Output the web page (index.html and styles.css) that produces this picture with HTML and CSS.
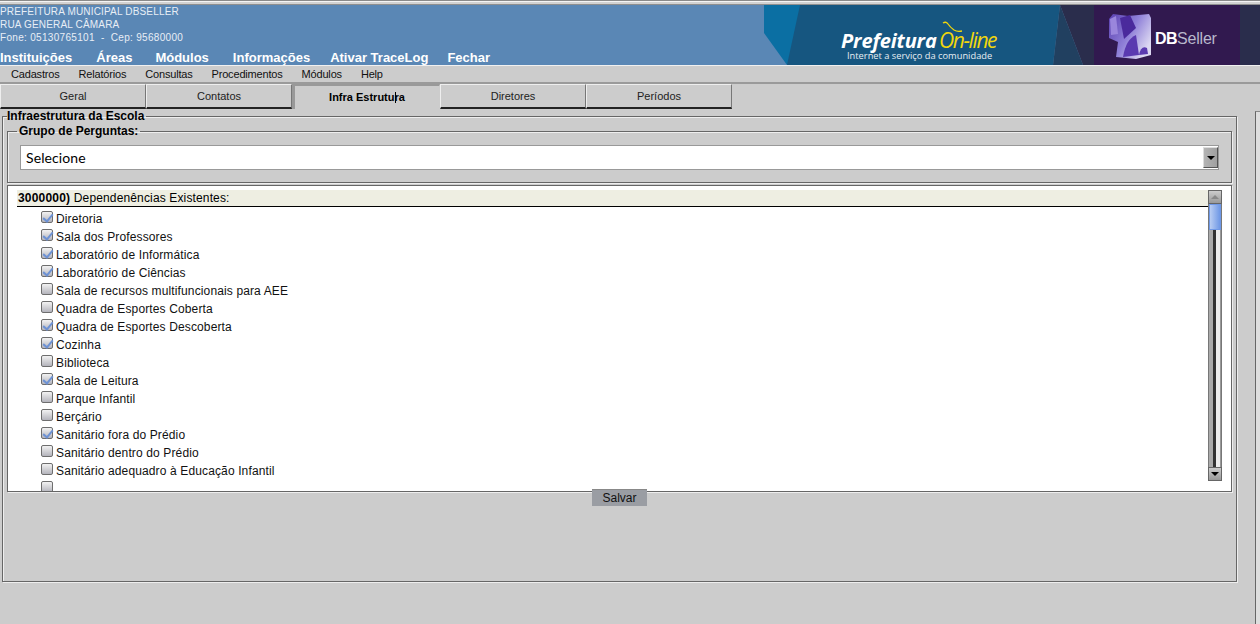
FILE: index.html
```html
<!DOCTYPE html>
<html lang="pt">
<head>
<meta charset="utf-8">
<title>Infraestrutura da Escola</title>
<link rel="stylesheet" href="styles.css">
</head>
<body>
<div class="topline"></div>
<header class="header">
  <div class="header-left">
    <div class="info">
      <div>PREFEITURA MUNICIPAL DBSELLER</div>
      <div>RUA GENERAL CÂMARA</div>
      <div class="phone">Fone: 05130765101 &nbsp;-&nbsp; Cep: 95680000</div>
    </div>
    <nav class="mainmenu">
      <a>Instituições</a><a>Áreas</a><a>Módulos</a><a>Informações</a><a>Ativar TraceLog</a><a>Fechar</a>
    </nav>
  </div>
  <svg class="banner" width="496" height="60" viewBox="0 0 496 60">
    <defs>
      <linearGradient id="cube" x1="0" y1="0" x2="1" y2="0.6">
        <stop offset="0" stop-color="#5a3fb0"/>
        <stop offset=".55" stop-color="#8f80d8"/>
        <stop offset="1" stop-color="#dcd8f2"/>
      </linearGradient>
    </defs>
    <rect width="496" height="60" fill="#5a87b5"/>
    <polygon points="0,0 36,0 36,60 23,60 0,28" fill="#0b6fa3"/>
    <polygon points="36,0 296,0 289,60 23,60" fill="#165680"/>
    <polygon points="296,0 289,60 319,60" fill="#214060"/>
    <polygon points="296,0 496,0 496,60 319,60" fill="#2a2d4c"/>
    <rect x="330" y="0" width="146" height="60" fill="#31194f"/>
    <text x="77" y="43" class="b-pref">Prefeitura</text>
    <text x="175" y="43" class="b-online">On-line</text>
    <path d="M179 18 q3 -2 5 1 t6 6 q3 2 8 1" fill="none" stroke="#f2d70c" stroke-width="1.3"/>
    <text x="83" y="54" class="b-sub">Internet a serviço da comunidade</text>
    <path d="M349 9 L364 11 L385 9 L387 13 L387 50 L372 54 L352 52 L354 37 L345 33 L345 14 Z" fill="url(#cube)"/>
    <path d="M346 14 L352 11 L354 29 L347 30 Z" fill="#9a86dc"/>
    <path d="M356 13 L366 10 L372 23 L360 34 Z" fill="#4a2a9c"/>
    <path d="M359 52 Q362 34 372 30 L375 50 Z" fill="#5a3ab0"/>
    <path d="M375 50 Q377 40 383 43 L384 49 Z" fill="#5a3ab0"/>
    <text x="391" y="39" class="b-db">DB</text>
    <text x="413" y="39" class="b-seller">Seller</text>
  </svg>
</header>
<nav class="submenu">
  <a>Cadastros</a><a>Relatórios</a><a>Consultas</a><a>Procedimentos</a><a>Módulos</a><a>Help</a>
</nav>
<div class="tabs">
  <div class="tab">Geral</div>
  <div class="tab">Contatos</div>
  <div class="tab active">Infra Estrutura<span class="caret"></span></div>
  <div class="tab">Diretores</div>
  <div class="tab">Períodos</div>
</div>
<div class="workspace">
  <main class="content">
    <fieldset class="panel">
      <legend>Infraestrutura da Escola</legend>
      <fieldset class="group">
        <legend>Grupo de Perguntas:</legend>
        <div class="select">
          <span class="select-text">Selecione</span>
          <span class="select-btn"><span class="arrow-down"></span></span>
        </div>
      </fieldset>
      <section class="listbox">
        <div class="questions">
          <div class="qhead"><b>3000000)</b> Dependenências Existentes:</div>
          <ul class="opts">
            <li><span class="cb on"></span>Diretoria</li>
            <li><span class="cb on"></span>Sala dos Professores</li>
            <li><span class="cb on"></span>Laboratório de Informática</li>
            <li><span class="cb on"></span>Laboratório de Ciências</li>
            <li><span class="cb"></span>Sala de recursos multifuncionais para AEE</li>
            <li><span class="cb"></span>Quadra de Esportes Coberta</li>
            <li><span class="cb on"></span>Quadra de Esportes Descoberta</li>
            <li><span class="cb on"></span>Cozinha</li>
            <li><span class="cb"></span>Biblioteca</li>
            <li><span class="cb on"></span>Sala de Leitura</li>
            <li><span class="cb"></span>Parque Infantil</li>
            <li><span class="cb"></span>Berçário</li>
            <li><span class="cb on"></span>Sanitário fora do Prédio</li>
            <li><span class="cb"></span>Sanitário dentro do Prédio</li>
            <li><span class="cb"></span>Sanitário adequadro à Educação Infantil</li>
            <li><span class="cb"></span></li>
          </ul>
        </div>
        <div class="scrollbar">
          <div class="sb-btn"><span class="arrow-up"></span></div>
          <div class="sb-thumb"></div>
          <div class="sb-track"></div>
          <div class="sb-btn"><span class="arrow-down"></span></div>
        </div>
      </section>
      <div class="actions"><button class="save" type="button">Salvar</button></div>
    </fieldset>
  </main>
  <aside class="side-edge"></aside>
</div>
</body>
</html>
```
FILE: styles.css
```css
* { box-sizing: border-box; }
html, body { margin: 0; height: 100%; overflow: hidden; }
body {
  background: #cccccc;
  font-family: "Liberation Sans", Arial, sans-serif;
  font-size: 11px;
  color: #000;
}
.topline {
  height: 5px;
  background: #d2d2d2;
  border-top: 1px solid #8a8a8a;
  border-bottom: 1px solid #8f8f8f;
  box-shadow: inset 0 1px 0 #f4f4f4;
}
.header {
  display: flex;
  height: 60px;
  background: #5a87b5;
  color: #fff;
}
.header-left { flex: 1; display: flex; flex-direction: column; }
.info { font-size: 10px; line-height: 13px; letter-spacing: .17px; color: #e8eef5; height: 40px; }
.phone { letter-spacing: .31px; }
.mainmenu { display: flex; margin-top: 5px; font-size: 13px; font-weight: bold; line-height: 15px; }
.mainmenu a { margin-right: 24px; }
.mainmenu a:nth-child(2) { margin-right: 23px; }
.mainmenu a:nth-child(4) { margin-right: 20px; }
.mainmenu a:nth-child(5) { margin-right: 19px; }
.banner { display: block; flex: none; }
.b-pref { font: italic bold 20px "Open Sans", sans-serif; fill: #fff; letter-spacing: -.12px; }
.b-online { font: italic 21px "Open Sans", sans-serif; fill: #f2d70c; letter-spacing: -1.4px; }
.b-sub { font: 9.3px "Open Sans", sans-serif; fill: #e8eef3; }
.b-db { font: bold 16px "Liberation Sans", sans-serif; fill: #fff; letter-spacing: -.6px; }
.b-seller { font: 16px "Liberation Sans", sans-serif; fill: #b8b8cc; letter-spacing: -.2px; }
.submenu {
  display: flex;
  height: 19px;
  padding-left: 11px;
  border-top: 1px solid #f0f0f0;
  border-bottom: 2px solid #9a9a9a;
  line-height: 17px;
  letter-spacing: -.18px;
  color: #111;
}
.submenu a { margin-right: 19px; }
.tabs { display: flex; height: 25px; }
.tab {
  width: 146px;
  height: 25px;
  text-align: center;
  line-height: 23px;
  color: #222;
  border-top: 1px solid #eee;
  border-left: 1px solid #eee;
  border-right: 1px solid #777;
  border-bottom: 2px solid #222;
  background: #cccccc;
}
.tab.active {
  width: 148px;
  font-weight: bold;
  color: #000;
  line-height: 23px;
  border-top: 2px solid #999;
  border-left: 3px solid #999;
  border-right: 1px solid #ccc;
  border-bottom: 0;
  position: relative;
}
.caret {
  display: block;
  position: absolute;
  left: 100px;
  top: 6px;
  width: 1px;
  height: 11px;
  background: #000;
}
.workspace { display: flex; height: 515px; }
.content { width: 1256px; flex: none; padding: 0 0 0 2px; }
.side-edge {
  flex: 1;
  margin-top: 2px;
  margin-left: -1px;
  background: #dedede;
  border-left: 1px solid #666;
  border-top: 1px solid #888;
}
fieldset { margin: 0; min-width: 0; }
.panel {
  width: 1235px;
  height: 473px;
  padding: 0 4px;
  border: 1px solid #666;
  box-shadow: 1px 1px 0 #eee, inset 1px 1px 0 #eee;
}
.panel > legend {
  font-size: 12px;
  font-weight: bold;
  padding: 0 2px 0 0;
  line-height: 14px;
}
.group {
  height: 59px;
  padding: 0;
  margin-top: 1px;
  border: 1px solid #666;
  box-shadow: 1px 1px 0 #eee, inset 1px 1px 0 #eee;
}
.group > legend {
  font-size: 12px;
  font-weight: bold;
  padding: 0 2px;
  margin-left: 9px;
  line-height: 14px;
}
.select {
  display: flex;
  height: 25px;
  margin: 7px 12px 0;
  justify-content: space-between;
  background: #fff;
  border: 1px solid #999;
}
.select-text { font: 14px/24px "Lato", sans-serif; padding-left: 5px; letter-spacing: .1px; }
.select-btn {
  width: 15px;
  margin: 1px 0;
  background: linear-gradient(90deg, #b4b4b4, #a0a0a0);
  border-right: 1px solid #555;
  border-bottom: 1px solid #555;
  border-top: 1px solid #ddd;
  border-left: 1px solid #ddd;
  display: flex;
  align-items: center;
  justify-content: center;
}
.arrow-down, .arrow-up { display: block; width: 0; height: 0; border-left: 4px solid transparent; border-right: 4px solid transparent; }
.arrow-down { border-top: 4px solid #000; }
.arrow-up { border-bottom: 4px solid #888; }
.listbox {
  display: flex;
  height: 307px;
  margin-top: 2px;
  background: #fff;
  border: 1px solid #666;
  box-shadow: 1px 1px 0 #eee;
  overflow: hidden;
}
.questions { flex: 1; padding: 4px 0 0 9px; min-width: 0; }
.qhead {
  height: 17px;
  padding-left: 1px;
  background: #eeeee2;
  border-bottom: 1px solid #000;
  font-size: 12px;
  line-height: 16px;
  letter-spacing: .14px;
}
.qhead b { letter-spacing: .2px; }
.opts { list-style: none; margin: 0; padding: 0 0 0 24px; }
.opts li {
  display: flex;
  height: 18px;
  font-size: 12px;
  line-height: 18px;
  letter-spacing: .13px;
  padding-top: 3px;
  color: #111;
}
.cb {
  flex: none;
  position: relative;
  width: 12px;
  height: 12px;
  margin: 1px 3px 0 0;
  border: 1px solid #6e6e6e;
  border-radius: 2px;
  background: linear-gradient(#f2f2f2, #b4b4bc);
}
.cb.on::after {
  content: "";
  position: absolute;
  left: 3px;
  top: 0;
  width: 4px;
  height: 8px;
  border-right: 2px solid #6d92d4;
  border-bottom: 2px solid #6d92d4;
  transform: rotate(40deg);
}
.scrollbar {
  flex: none;
  display: flex;
  flex-direction: column;
  width: 14px;
  height: 291px;
  margin: 4px 9px 0 0;
  border-left: 1px solid #777;
  border-right: 1px solid #777;
}
.sb-btn {
  flex: none;
  height: 14px;
  background: linear-gradient(#ccc, #999);
  border: 1px solid #666;
  margin: 0 -1px;
  display: flex;
  align-items: center;
  justify-content: center;
}
.sb-thumb {
  flex: none;
  height: 26px;
  background: linear-gradient(90deg, #b9cdf2, #6f98e6);
  border: 1px solid #6f98e6;
}
.sb-track {
  flex: 1;
  background: linear-gradient(90deg, #aaa 0 34%, #333 34% 60%, #eee 60% 90%, #999 90%);
}
.actions { display: flex; justify-content: center; margin-top: -3px; position: relative; }
.save {
  width: 55px;
  height: 17px;
  padding: 0;
  font: 12px "Liberation Sans", Arial, sans-serif;
  color: #111;
  background: #9a9da3;
  border: 0;
  border-top: 1px solid #888;
}
```
